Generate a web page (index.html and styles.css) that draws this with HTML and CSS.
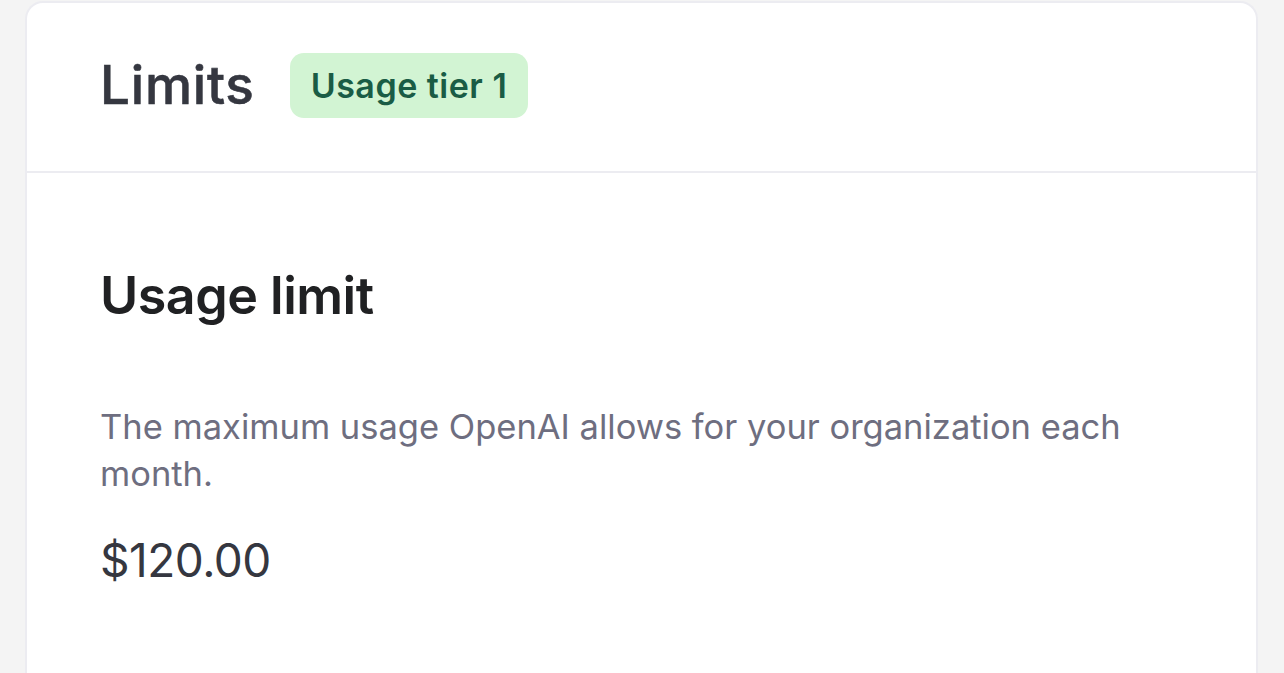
FILE: index.html
```html
<!DOCTYPE html>
<html lang="en">
<head>
    <meta charset="UTF-8">
    <meta name="viewport" content="width=device-width, initial-scale=1.0">
    <title>Limits</title>
    <link rel="stylesheet" href="styles.css">
</head>
<body>
    <div class="card">
        <div class="card-header">
            <h1>Limits</h1>
            <span class="tier">Usage tier 1</span>
        </div>
        <div class="card-body">
            <h2>Usage limit</h2>
            <p class="desc">The maximum usage OpenAI allows for your organization each month.</p>
            <div class="amount">$120.00</div>
        </div>
    </div>
</body>
</html>
```
FILE: styles.css
```css
body {
    font-family: Inter, "Noto Sans", sans-serif;
    background-color: #f4f4f4;
    margin: 0;
    height: 673px;
    overflow: hidden;
}
.card {
    margin: 1px 26px 0 25px;
    background: #fff;
    border: 2px solid #ececf1;
    border-bottom: none;
    border-radius: 18px 18px 0 0;
    min-height: 700px;
}
.card-header {
    display: flex;
    align-items: center;
    gap: 35px;
    height: 168px;
    padding: 0 73px;
    border-bottom: 2px solid #ececf1;
}
h1 {
    margin: 0 0 4px;
    font-size: 53px;
    font-weight: 500;
    color: #353740;
    letter-spacing: 0.8px;
    -webkit-text-stroke: 0.6px #353740;
}
.tier {
    background: #d2f4d3;
    color: #1a5c45;
    font-size: 34px;
    font-weight: 600;
    padding: 12px 21px;
    border-radius: 14px;
    margin-bottom: 4px;
    letter-spacing: 0.5px;
}
.card-body {
    padding: 93px 73px 0;
}
h2 {
    margin: 0;
    font-size: 52px;
    font-weight: 600;
    color: #202123;
    letter-spacing: -0.5px;
    line-height: 60px;
}
.desc {
    margin: 77px 0 0;
    font-size: 34.5px;
    line-height: 47px;
    color: #6e6e80;
    max-width: 1070px;
}
.amount {
    margin-top: 35px;
    font-size: 46px;
    color: #353740;
    letter-spacing: -0.5px;
}
```
